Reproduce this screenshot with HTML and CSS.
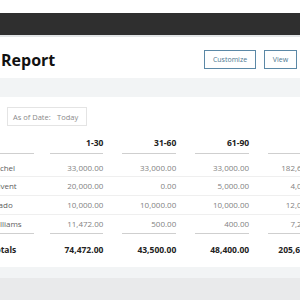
FILE: index.html
```html
<!DOCTYPE html>
<html>
<head>
    <title>Aging Report</title>
    <link rel="stylesheet" href="styles.css">
</head>
<body>
    <div class="top-gap"></div>
    <div class="navbar"></div>

    <div class="header">
        <h1 class="title">Report</h1>
        <div class="actions">
            <button class="btn btn-customize">Customize</button>
            <button class="btn btn-view">View</button>
        </div>
    </div>

    <div class="band"></div>

    <div class="card">
        <div class="filter">
            <span class="filter-label">As of Date:</span>
            <span class="filter-value">Today</span>
        </div>

        <table class="report">
            <thead>
                <tr>
                    <th class="name"><div class="head-cell">&nbsp;</div></th>
                    <th><div class="head-cell">1-30</div></th>
                    <th><div class="head-cell">31-60</div></th>
                    <th><div class="head-cell">61-90</div></th>
                    <th><div class="head-cell">91+</div></th>
                </tr>
            </thead>
            <tbody>
                <tr class="first">
                    <td class="name">Rachel</td>
                    <td>33,000.00</td>
                    <td>33,000.00</td>
                    <td>33,000.00</td>
                    <td>182,600.00</td>
                </tr>
                <tr>
                    <td class="name">Advent</td>
                    <td>20,000.00</td>
                    <td>0.00</td>
                    <td>5,000.00</td>
                    <td>4,000.00</td>
                </tr>
                <tr>
                    <td class="name">Prado</td>
                    <td>10,000.00</td>
                    <td>10,000.00</td>
                    <td>10,000.00</td>
                    <td>12,000.00</td>
                </tr>
                <tr class="last">
                    <td class="name">Williams</td>
                    <td>11,472.00</td>
                    <td>500.00</td>
                    <td>400.00</td>
                    <td>7,200.00</td>
                </tr>
            </tbody>
            <tfoot>
                <tr>
                    <td class="name"><div class="total-cell">Totals</div></td>
                    <td><div class="total-cell">74,472.00</div></td>
                    <td><div class="total-cell">43,500.00</div></td>
                    <td><div class="total-cell">48,400.00</div></td>
                    <td><div class="total-cell">205,600.00</div></td>
                </tr>
            </tfoot>
        </table>
    </div>

    <div class="footer-light"></div>
    <div class="footer"></div>
</body>
</html>
```

FILE: styles.css
```css
html, body {
    margin: 0;
    padding: 0;
    overflow: hidden;
}

body {
    width: 300px;
    height: 300px;
    background-color: #e9eaeb;
    font-family: "Open Sans", Arial, sans-serif;
}

.top-gap {
    height: 13px;
    background-color: #fff;
}

.navbar {
    height: 22px;
    background-color: #2f2f2f;
    border-bottom: 2px solid #e2e5e7;
}

.header {
    height: 41px;
    box-sizing: border-box;
    padding: 13px 3px 0 1px;
    background-color: #fff;
    display: flex;
    justify-content: space-between;
    align-items: flex-start;
}

.title {
    margin: 0;
    font-size: 16px;
    line-height: 20px;
    font-weight: bold;
    color: #111;
}

.actions {
    display: flex;
    gap: 8px;
}

.btn {
    height: 19px;
    box-sizing: border-box;
    padding: 0;
    background-color: #fff;
    border: 1px solid #5b88a6;
    color: #4d7892;
    font-family: "Open Sans", Arial, sans-serif;
    font-size: 7px;
    line-height: 17px;
    cursor: pointer;
}

.btn-customize {
    width: 52px;
}

.btn-view {
    width: 33px;
}

.band {
    height: 19px;
    background-color: #f2f4f5;
}

.card {
    height: 170px;
    box-sizing: border-box;
    padding-top: 10px;
    background-color: #fff;
}

.filter {
    margin-left: 7px;
    width: 80px;
    height: 19px;
    box-sizing: border-box;
    border: 1px solid #e4e4e4;
    padding-left: 5px;
    display: flex;
    align-items: center;
    font-size: 7.5px;
    color: #8a8a8a;
}

.filter-label {
    width: 44px;
}

.report {
    margin-left: -40px;
    border-collapse: collapse;
    border-spacing: 0;
    table-layout: fixed;
    width: 362px;
    font-size: 8px;
    color: #828282;
}

.report th,
.report td {
    padding: 0 0 0 19px;
    text-align: right;
    white-space: nowrap;
}

.report th.name,
.report td.name {
    width: 40px;
    padding-left: 30.5px;
    text-align: left;
    color: #606060;
}

.head-cell {
    height: 28px;
    box-sizing: border-box;
    padding-top: 11px;
    line-height: 12px;
    border-bottom: 1px solid #cfcfcf;
    font-size: 8.5px;
    font-weight: bold;
    color: #222;
}

.name .head-cell {
    margin-right: -3px;
}

.report tbody td {
    height: 18px;
    line-height: 18px;
    border-bottom: 1px solid #efefef;
}

.report tbody tr.first td {
    height: 22px;
    padding-top: 6px;
    box-sizing: border-box;
    line-height: 16px;
}

.report tbody tr.last td {
    border-bottom: none;
}

.total-cell {
    border-top: 1px solid #cfcfcf;
    padding-top: 10px;
    line-height: 12px;
    font-size: 8.5px;
    font-weight: bold;
    color: #222;
}

.report td.name .total-cell {
    color: #222;
    margin-right: -3px;
}

.footer-light {
    height: 11px;
    background-color: #f2f4f5;
}

.footer {
    height: 22px;
    background-color: #e9eaeb;
}
```
